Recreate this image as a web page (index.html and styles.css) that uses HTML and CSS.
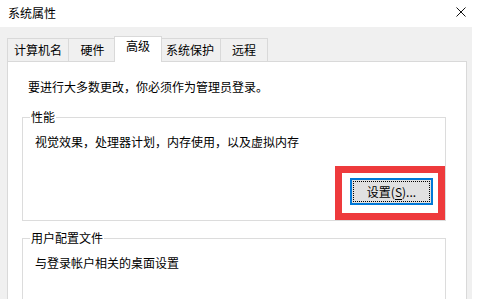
FILE: index.html
```html
<!DOCTYPE html>
<html lang="zh-CN">
<head>
<meta charset="utf-8">
<title>系统属性</title>
<link rel="stylesheet" href="styles.css">
</head>
<body>
<div class="window">
  <div class="titlebar">
    <span class="title">系统属性</span>
    <svg class="close" width="10" height="10" viewBox="0 0 10 10"><path d="M0.5 0.5L9.5 9.5M9.5 0.5L0.5 9.5" stroke="#111" stroke-width="1" fill="none"/></svg>
  </div>
  <div class="body">
    <div class="tabs">
      <div class="tab">计算机名</div>
      <div class="tab">硬件</div>
      <div class="tab tab-active">高级</div>
      <div class="tab">系统保护</div>
      <div class="tab tab-last">远程</div>
    </div>
    <div class="panel">
      <p class="intro">要进行大多数更改，你必须作为管理员登录。</p>
      <fieldset class="group">
        <legend>性能</legend>
        <p class="desc">视觉效果，处理器计划，内存使用，以及虚拟内存</p>
        <div class="actions">
          <div class="btn-wrap">
            <button class="btn" type="button">设置(<u>S</u>)...</button>
            <span class="highlight"></span>
          </div>
        </div>
      </fieldset>
      <fieldset class="group group-profile">
        <legend>用户配置文件</legend>
        <p class="desc">与登录帐户相关的桌面设置</p>
      </fieldset>
    </div>
  </div>
</div>
</body>
</html>
```
FILE: styles.css
```css
* { box-sizing: border-box; }
html, body {
  margin: 0;
  padding: 0;
  background: #ffffff;
}
body {
  width: 490px;
  height: 299px;
  overflow: hidden;
  font-family: "Noto Sans CJK SC", "Microsoft YaHei", sans-serif;
  font-size: 12px;
  color: #000;
}
.window {
  width: 490px;
  height: 299px;
  overflow: hidden;
}
.titlebar {
  height: 27px;
  display: flex;
  justify-content: space-between;
  align-items: flex-start;
  padding: 5px 24px 0 8px;
  background: #fff;
}
.title {
  line-height: 16px;
}
.close {
  display: block;
  margin-top: 2px;
}
.body {
  width: 472px;
  height: 272px;
  background: #f0f0f0;
  padding-top: 9px;
  overflow: hidden;
}
.tabs {
  display: flex;
  align-items: flex-end;
  margin-left: 7px;
}
.tab {
  height: 23px;
  min-width: 48px;
  padding: 0 6px;
  text-align: center;
  line-height: 21px;
  border-top: 1px solid #d9d9d9;
  border-left: 1px solid #d9d9d9;
  background: #f0f0f0;
  white-space: nowrap;
}
.tab-last {
  border-right: 1px solid #d9d9d9;
}
.tab-active {
  position: relative;
  z-index: 1;
  height: 26px;
  margin: 0 -2px -1px;
  line-height: 18px;
  background: #fff;
  border-right: 1px solid #d9d9d9;
}
.tab-active + .tab {
  border-left: none;
}
.panel {
  margin-left: 7px;
  width: 460px;
  height: 260px;
  background: #fff;
  border: 1px solid #d9d9d9;
  padding: 0 20px 0 14px;
}
.intro {
  margin: 0;
  padding: 17px 0 0 6px;
  line-height: 16px;
}
.group {
  margin: 14px 0 0 0;
  min-width: 0;
  border: 1px solid #dcdcdc;
  padding: 9px 12px 15px 7px;
}
.group legend {
  padding: 0 1px;
  line-height: 16px;
}
.desc {
  margin: 0 0 0 5px;
  line-height: 16px;
}
.actions {
  display: flex;
  justify-content: flex-end;
  margin-top: 28px;
}
.btn-wrap {
  position: relative;
}
.btn {
  position: relative;
  display: block;
  width: 83px;
  height: 27px;
  margin: 0;
  padding: 0;
  font: inherit;
  line-height: 16px;
  color: #000;
  background: #e1e1e1;
  border: 1px solid #0078d7;
  box-shadow: inset 0 0 0 1px #0078d7;
  border-radius: 0;
}
.btn::after {
  content: "";
  position: absolute;
  inset: 2px;
  border: 1px dotted #000;
}
.btn u {
  text-decoration: underline;
  text-underline-offset: 2px;
}
.highlight {
  position: absolute;
  left: -15px;
  top: -12px;
  right: -12px;
  bottom: -15px;
  border: 7px solid #ee3a3c;
  pointer-events: none;
}
.group-profile {
  margin-top: 9px;
  min-height: 120px;
}
```
